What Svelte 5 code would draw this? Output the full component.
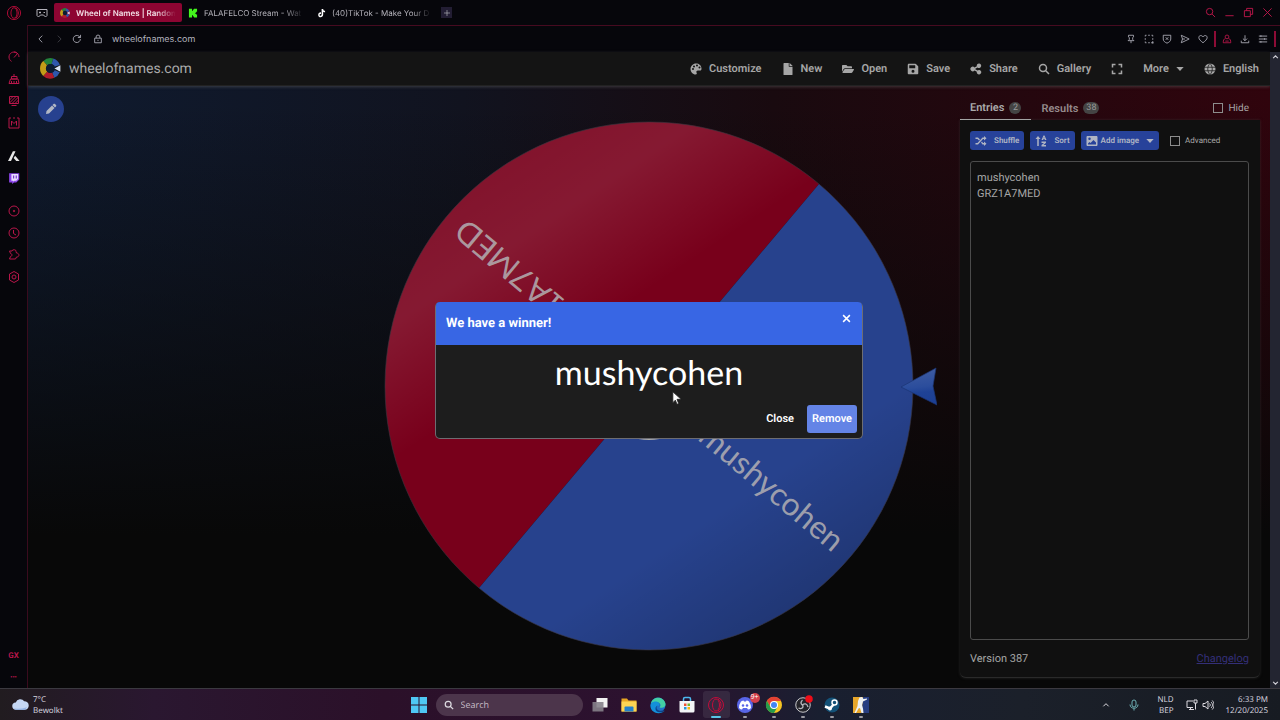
<script>
  const tabs = [
    { title: 'Wheel of Names | Random', icon: 'wheel', active: true },
    { title: 'FALAFELCO Stream - Wat', icon: 'kick' },
    { title: '(40)TikTok - Make Your D', icon: 'tiktok' },
  ];

  // 24x24 outline icons, drawn with the current colour
  const lines = {
    back: 'M15 4l-8 8 8 8',
    forward: 'M9 4l8 8-8 8',
    reload: 'M20 12a8.500 8.500 0 1 1-3-6.500L20 8M20.500 2v6.500H14',
    lock: 'M4 10h16v11H4zM7.500 10V7a4.500 4.500 0 0 1 9 0v3M12 14v3',
    search: 'M10 3a7 7 0 1 0 0 14a7 7 0 1 0 0-14M15.500 15.500L22 22',
    minimize: 'M3 19h18',
    restore: 'M3 8h13v13H3zM8 8V3h13v13h-5',
    close: 'M3 3l18 18M21 3L3 21',
    pin: 'M6 3h12v4l-2 2v4l3 3H5l3-3V9L6 7zM12 16v6',
    snapshot: 'M3 3h3M10 3h4M18 3h3v3M21 10v4M3 3v3M3 10v4M3 18v3h3M10 21h4M17 21h6M21 17v6',
    shield: 'M3 3h18v9c0 5-4 8-9 10c-5-2-9-5-9-10zM9 8l6 6M15 8l-6 6',
    send: 'M3 3l19 9-19 9 3-9zM6 12h6',
    heart: 'M12 21C7 17 2 13 2 8.500C2 3 9 2 12 7c3-5 10-4 10 1.500C22 13 17 17 12 21z',
    user: 'M12 2.500a4.500 4.500 0 1 0 0 9a4.500 4.500 0 1 0 0-9M8 11c-4 1-5 4-5 10h18c0-6-1-9-5-10M8 17h8',
    download: 'M12 3v13M7 11l5 5 5-5M3 16v5h18v-5',
    menu: 'M2 5h20M2 12h20M2 19h20M7 3v4M16 10v4M7 17v4',
    gauge: 'M22 12a10 10 0 1 0-15 8.700M12 13l8-9M12 2a10 10 0 0 1 7 3',
    cleaner: 'M12 2v5M7 7h11v5H7zM5 12h15l2 9H2zM7 16v5M12 16v5M17 16v5',
    wallpaper: 'M3 3h18v14H3zM3 10l7-7M3 16L16 3M8 17L21 4M14 17l7-7M7 21h10',
    mods: 'M6 2H2v20h20V2h-4M10 2h4M7 17V8l5 5 5-5v9',
    player: 'M12 2a10 10 0 1 0 0 20a10 10 0 1 0 0-20M12 10.500a1.500 1.500 0 1 0 0 3a1.500 1.500 0 1 0 0-3',
    clock: 'M12 2a10 10 0 1 0 0 20a10 10 0 1 0 0-20M11 6v7l5 3',
    puzzle: 'M3 4h5a4 3 0 0 1 8 1l1 3c6 0 7 8 0 8l-2 4H3l2-5c4-1 4-5 0-6z',
    gear: 'M12 1l9 5v12l-9 5-9-5V6zM12 8a4 4 0 1 0 0 8a4 4 0 1 0 0-8',
    gamepad: 'M2 5h20v12l-3 3-4-4H9l-4 4-3-3zM6 11h4M8 9v4M15 11h3',
    expand: 'M3 9V3h6M15 3h6v6M21 15v6h-6M9 21H3v-6',
    plus: 'M12 3v18M3 12h18',
    up: 'M4 16l8-8 8 8',
    down: 'M4 8l8 8 8-8',
    mic: 'M12 2a4 4 0 0 0-4 4v6a4 4 0 0 0 8 0V6a4 4 0 0 0-4-4M4 11c0 10 16 10 16 0M12 19v4',
    network: 'M14 4H2v13h12M6 21h10M9 17v4M16 2h6v6h-6zM19 8v13',
    volume: 'M2 9h4l6-5v16l-6-5H2zM15 9c2 2 2 4 0 6M18 6c4 4 4 8 0 12M20.500 3c5 6 5 12 0 18',
  };

  const solids = {
    palette: ['0 0 24 24', 'M12 1C6 1 1 6 1 12s5 11 10 11c3 0 3-2 2-4s0-4 3-4h4c2 0 3-1 3-4C23 5 18 1 12 1zM6 14a2 2 0 1 1 0-4a2 2 0 0 1 0 4zm2-5a2 2 0 1 1 0-4a2 2 0 0 1 0 4zm6-2a2 2 0 1 1 0-4a2 2 0 0 1 0 4zm5 4a2 2 0 1 1 0-4a2 2 0 0 1 0 4z'],
    file: ['0 0 384 512', 'M224 136V0H24C10 0 0 10 0 24v464c0 14 10 24 24 24h336c14 0 24-10 24-24V160H248c-13 0-24-11-24-24zM384 128H256V0h6l122 122z'],
    folder: ['0 0 576 512', 'M573 292L500 416a64 64 0 0 1-55 32H45c-19 0-30-20-21-36l73-124a64 64 0 0 1 55-32h400c19 0 30 20 21 36zM152 224h328v-48c0-27-21-48-48-48H272l-64-64H48C21 64 0 85 0 112v278l69-118c17-30 49-48 83-48z'],
    save: ['0 0 448 512', 'M434 130l-84-84a48 48 0 0 0-34-14H48C21 32 0 54 0 80v352c0 26 21 48 48 48h352c27 0 48-22 48-48V164a48 48 0 0 0-14-34zM224 416a64 64 0 1 1 0-128a64 64 0 0 1 0 128zM320 112v100c0 7-5 12-12 12H76c-7 0-12-5-12-12V108c0-7 5-12 12-12h228z'],
    share: ['0 0 24 24', 'M18 1a4.500 4.500 0 0 0-4.400 5.500L9 9.200a4.500 4.500 0 1 0 0 5.600l4.600 2.700A4.500 4.500 0 1 0 15 15l-5-3 5-3A4.500 4.500 0 1 0 18 1z'],
    shuffle: ['0 0 24 24', 'M1 5h5l4 4-2 2-3-3H1zM1 19v-3h4L15 5h3V2l5 4.500L18 11V8h-2L6 19zM12 15l2-2 2 3h2v-3l5 4.500L18 22v-3h-3z'],
    sort: ['0 0 24 24', 'M6 2l5 6H7.500v14h-3V8H1zM13 10l4-9h2l4 9h-3l-.5-1.500h-3L16 10zM17 6.500h2L18 4zM13 13h9v2.500l-5 4.500h5v3h-9v-3l5-4h-5z'],
    image: ['0 0 24 24', 'M3 2h18c1 0 2 1 2 2v16c0 1-1 2-2 2H3c-1 0-2-1-2-2V4c0-1 1-2 2-2zM4 19h16v-4l-5-5-6 6-2-2-3 3zM7 5a2.500 2.500 0 1 0 0 5a2.500 2.500 0 0 0 0-5z'],
    caret: ['0 0 24 24', 'M1 6h22L12 18z'],
    pencil: ['0 0 24 24', 'M3 16L14 5l5 5L8 21l-6 1zM15 4l2-2c1-1 2-1 3 0l2 2c1 1 1 2 0 3l-2 2z'],
  };

  const actions = [
    { label: 'Customize', icon: 'palette' },
    { label: 'New', icon: 'file' },
    { label: 'Open', icon: 'folder' },
    { label: 'Save', icon: 'save' },
    { label: 'Share', icon: 'share' },
  ];
  const sideGroups = [
    ['gauge', 'cleaner', 'wallpaper', 'mods'],
    ['aria', 'twitch'],
    ['player', 'clock', 'puzzle', 'gear'],
  ];
  const pageTools = ['pin', 'snapshot', 'shield', 'send', 'heart'];
  const apps = ['taskview', 'explorer', 'edge', 'store', 'opera', 'discord', 'chrome', 'obs', 'steam', 'cs'];
  const running = ['discord', 'chrome', 'obs', 'steam', 'cs'];

  let entries = $state('mushycohen\nGRZ1A7MED');
  let hidden = $state(false);
  let advanced = $state(false);
  let winnerOpen = $state(true);
  let names = $derived(entries.split('\n').filter((name) => name.trim()));

  function removeWinner() {
    entries = names.slice(1).join('\n');
    winnerOpen = false;
  }
</script>

{#snippet line(name)}
  <svg class="line" viewBox="0 0 24 24" aria-hidden="true"><path d={lines[name]} /></svg>
{/snippet}

{#snippet solid(name)}
  <svg class="solid" viewBox={solids[name][0]} aria-hidden="true"><path d={solids[name][1]} /></svg>
{/snippet}

{#snippet brand(name)}
  <svg class="brand" viewBox="0 0 32 32" aria-hidden="true">
    {#if name === 'wheel'}
      <g fill="none" stroke-width="9">
        <path d="M8 8A11 11 0 0 1 19 5" stroke="#23833c" />
        <path d="M19 5A11 11 0 0 1 26 12" stroke="#2f57ac" />
        <path d="M26 20A11 11 0 0 1 20 26" stroke="#2f57ac" />
        <path d="M20 26A11 11 0 0 1 8 24" stroke="#b01c2c" />
        <path d="M8 24A11 11 0 0 1 8 8" stroke="#c39d18" />
      </g>
      <circle cx="16" cy="16" r="7" fill="#0c1c33" />
      <path d="M22 16l9-5v10z" fill="#d8e2f4" />
    {:else if name === 'kick'}
      <path d="M3 2h10v7h3V5h3V2h10v10h-3v3h-3v3h3v3h3v9H19v-3h-3v-4h-3v7H3z" fill="#43f51d" />
    {:else if name === 'tiktok'}
      <path d="M18 3h5c0 4 3 6 6 6v5c-3 0-4-1-6-2v9c0 11-16 11-16 1 0-6 5-9 9-8v5c-6-1-6 6-2 6 3 0 4-2 4-4z" fill="#fff" />
    {:else if name === 'opera'}
      <g fill="none" stroke="#c20c3b" stroke-width="2">
        <circle cx="16" cy="16" r="15" />
        <ellipse cx="16" cy="16" rx="7" ry="12" />
        <path d="M20 4c8 7 8 17 0 24" />
      </g>
    {:else if name === 'aria'}
      <path d="M13 3h7L8 29H0zM19 15l12 14h-9l-7-8z" fill="#e6e6e6" />
    {:else if name === 'twitch'}
      <path d="M3 3h27v17l-8 8h-6l-5 4v-4H3z" fill="#8b45e8" />
      <path d="M9 5h18v13l-5 5h-5l-3 3v-3H9z" fill="#e8dcff" />
      <path d="M15 9v8M22 9v8" stroke="#7134c6" stroke-width="3" />
    {:else if name === 'start'}
      <path d="M0 0h15v15H0zM17 0h15v15H17zM0 17h15v15H0zM17 17h15v15H17z" fill="#4fc8f4" />
    {:else if name === 'taskview'}
      <path d="M9 2h22v19H9z" fill="#f2f2f2" />
      <path d="M1 10h22v19H1z" fill="#85818a" fill-opacity=".9" />
    {:else if name === 'explorer'}
      <path d="M1 3h11l3 4h16v22H1z" fill="#e7a623" />
      <path d="M1 9h30v20H1z" fill="#fcd454" />
      <path d="M7 29v-8q0-2 2-2h14q2 0 2 2v8z" fill="#2380cb" />
    {:else if name === 'edge'}
      <circle cx="16" cy="16" r="15" fill="#1d72c8" />
      <path d="M2 13C5-2 27-3 31 13c1 8-7 10-12 8 6-6-2-16-17-8z" fill="#43cfa4" />
      <path d="M2 13c9-8 19-2 16 5-4-4-10 3-3 9 5 4 11 3 15 0C18 39-4 29 2 13z" fill="#1490da" />
      <path d="M14 18c-4 8 6 12 15 8-5 7-19 6-18-3 0-3 2-5 3-5z" fill="#0b438c" />
    {:else if name === 'store'}
      <path d="M9 9V4q0-3 3-3h8q3 0 3 3v5" fill="none" stroke="#4cb9ef" stroke-width="3" />
      <path d="M1 8h30v20q0 3-3 3H4q-3 0-3-3z" fill="#f3f5f7" />
      <path d="M10 13h5v5h-5z" fill="#ee5131" />
      <path d="M17 13h5v5h-5z" fill="#76b72b" />
      <path d="M10 20h5v5h-5z" fill="#2498da" />
      <path d="M17 20h5v5h-5z" fill="#f8b80c" />
    {:else if name === 'discord'}
      <circle cx="16" cy="16" r="16" fill="#5865e8" />
      <path d="M8 9q4-2 5-2l1 2h4l1-2q3 0 5 2 4 6 4 13-3 3-6 3l-2-3h-8l-2 3q-3 0-6-3 0-7 4-13z" fill="#fff" />
      <circle cx="12" cy="17" r="2.500" fill="#5865e8" />
      <circle cx="20" cy="17" r="2.500" fill="#5865e8" />
    {:else if name === 'chrome'}
      <circle cx="16" cy="16" r="16" fill="#f6c523" />
      <path d="M2 8A16 16 0 0 1 30 8H16L9 20z" fill="#e34133" />
      <path d="M2 8A16 16 0 0 0 16 32l7-12H9z" fill="#279c4b" />
      <circle cx="16" cy="16" r="8" fill="#fff" />
      <circle cx="16" cy="16" r="6" fill="#4285f4" />
    {:else if name === 'obs'}
      <circle cx="16" cy="16" r="14.500" fill="#24242a" stroke="#c8c8cc" stroke-width="2" />
      <path d="M15 6c-5 5-3 10 2 11M7 22c6 3 11-1 8-6M26 20c-2-7-7-8-11-4" fill="none" stroke="#b4b4ba" stroke-width="2.500" />
      <circle cx="28" cy="4" r="7.500" fill="#ee0d18" />
    {:else if name === 'steam'}
      <circle cx="16" cy="16" r="15" fill="#135177" />
      <path d="M2 19l10 4 9-10" stroke="#fff" stroke-width="5" fill="none" />
      <circle cx="21" cy="11" r="5" fill="#135177" stroke="#fff" stroke-width="3" />
      <circle cx="12" cy="23" r="4" fill="#fff" />
    {:else if name === 'cs'}
      <path d="M0 0h32v32H0z" fill="#e7a629" />
      <path d="M20 0h12v32H17z" fill="#263d80" />
      <path d="M13 1l5-1 3 4 7-1v2l-8 4-2 7 2 7 1 9h-4l-3-10-3 1-5 9H3l6-14 1-10z" fill="#edf0f2" />
    {/if}
  </svg>
{/snippet}

<div class="desktop">
  <div class="browser">
    <aside class="sidebar">
      <button class="opera" aria-label="Opera GX menu">{@render brand('opera')}</button>
      {#each sideGroups as group}
        <div class="side-group">
          {#each group as name}
            <button aria-label={name}>
              {#if lines[name]}{@render line(name)}{:else}{@render brand(name)}{/if}
            </button>
          {/each}
        </div>
      {/each}
      <div class="side-bottom">
        <button>GX</button>
        <button aria-label="More">•••</button>
      </div>
    </aside>

    <div class="window">
      <div class="tab-strip">
        <button class="gx-corner" aria-label="GX Corner">{@render line('gamepad')}</button>
        {#each tabs as tab}
          <button class="tab" class:active={tab.active}>
            {@render brand(tab.icon)}
            <span>{tab.title}</span>
          </button>
        {/each}
        <button class="new-tab" aria-label="New tab">{@render line('plus')}</button>
        <div class="window-buttons">
          {#each ['search', 'minimize', 'restore', 'close'] as name}
            <button aria-label={name}>{@render line(name)}</button>
          {/each}
        </div>
      </div>

      <div class="frame">
        <div class="address-bar">
          <button aria-label="Back">{@render line('back')}</button>
          <button class="dim" aria-label="Forward">{@render line('forward')}</button>
          <button aria-label="Reload">{@render line('reload')}</button>
          <span class="lock">{@render line('lock')}</span>
          <input type="text" aria-label="Address" value="wheelofnames.com" />
          <div class="tools">
            {#each pageTools as name}
              <button aria-label={name}>{@render line(name)}</button>
            {/each}
          </div>
          <i class="divider"></i>
          <div class="tools">
            <button class="profile" aria-label="Profile">{@render line('user')}</button>
            <button aria-label="Downloads">{@render line('download')}</button>
            <button aria-label="Easy setup">{@render line('menu')}</button>
          </div>
          <i class="divider"></i>
        </div>

        <div class="viewport">
          <div class="site">
            <header>
              <a class="logo" href="#home">{@render brand('wheel')}<span>wheelofnames.com</span></a>
              <nav>
                {#each actions as action}
                  <button>{@render solid(action.icon)}{action.label}</button>
                {/each}
                <button class="bold-line">{@render line('search')}Gallery</button>
                <button class="bold-line" aria-label="Fullscreen">{@render line('expand')}</button>
                <button>More<span class="caret">{@render solid('caret')}</span></button>
                <button>
                  <svg class="solid" viewBox="0 0 24 24" aria-hidden="true">
                    <circle cx="12" cy="12" r="11" />
                    <path class="cut" d="M1 8.500h22M1 15.500h22M12 1c-6 6-6 16 0 22M12 1c6 6 6 16 0 22" />
                  </svg>
                  English
                </button>
              </nav>
            </header>

            <main>
              <button class="edit" aria-label="Edit title">{@render solid('pencil')}</button>

              <svg class="wheel" viewBox="0 0 576 540" role="img" aria-label="Wheel">
                <defs>
                  <linearGradient id="shine" x1="0.2" y1="0.05" x2="0.8" y2="0.95">
                    <stop offset="0" stop-color="#fff" stop-opacity="0.07" />
                    <stop offset="0.16" stop-color="#fff" stop-opacity="0.1" />
                    <stop offset="0.36" stop-color="#fff" stop-opacity="0" />
                    <stop offset="0.75" stop-color="#000" stop-opacity="0" />
                    <stop offset="1" stop-color="#000" stop-opacity="0.2" />
                  </linearGradient>
                  <linearGradient id="pointer" x1="0.6" y1="0" x2="0.7" y2="1">
                    <stop offset="0" stop-color="#3f5ca2" />
                    <stop offset="0.5" stop-color="#2b4d9c" />
                    <stop offset="0.65" stop-color="#1f4296" />
                    <stop offset="1" stop-color="#1c3f94" />
                  </linearGradient>
                </defs>
                <path d="M458 67A264 264 0 0 0 118 471Z" fill="#78001b" />
                <path d="M458 67A264 264 0 0 1 118 471Z" fill="#27428d" />
                <circle cx="288" cy="269" r="264" fill="url(#shine)" stroke="#3b3540" stroke-opacity="0.6" />
                <g class="names" transform="translate(288 269)">
                  <text transform="rotate(40)" x="248" y="10">mushycohen</text>
                  <text transform="rotate(220)" x="248" y="12">GRZ1A7MED</text>
                </g>
                <circle cx="288" cy="269" r="54" fill="#aaa" />
                <path d="M540 270L575 251L572 269L576 288Z" fill="url(#pointer)" stroke="#1b3573" stroke-opacity="0.7" />
              </svg>

              <section class="panel">
                <div class="panel-tabs">
                  <button class="current">Entries <b>{names.length}</b></button>
                  <button>Results <b>38</b></button>
                  <label><input type="checkbox" bind:checked={hidden} />Hide</label>
                </div>
                <div class="card">
                  <div class="card-tools">
                    <button>{@render solid('shuffle')}Shuffle</button>
                    <button>{@render solid('sort')}Sort</button>
                    <button class="image">{@render solid('image')}Add image<span class="caret">{@render solid('caret')}</span></button>
                    <label><input type="checkbox" bind:checked={advanced} />Advanced</label>
                  </div>
                  <textarea aria-label="Entries" spellcheck="false" bind:value={entries}></textarea>
                  <div class="card-foot">
                    <span>Version 387</span>
                    <a href="#changelog">Changelog</a>
                  </div>
                </div>
              </section>
            </main>
          </div>

          <div class="scrollbar">
            {@render line('up')}
            {@render line('down')}
          </div>

          {#if winnerOpen}
            <div class="overlay">
              <div class="dialog" role="dialog" aria-labelledby="winner-title">
                <div class="dialog-head">
                  <h2 id="winner-title">We have a winner!</h2>
                  <button aria-label="Close dialog" onclick={() => (winnerOpen = false)}>{@render line('close')}</button>
                </div>
                <p>{names[0]}</p>
                <div class="dialog-actions">
                  <button onclick={() => (winnerOpen = false)}>Close</button>
                  <button class="remove" onclick={removeWinner}>Remove</button>
                </div>
                <svg class="cursor" viewBox="0 0 12 18" aria-hidden="true">
                  <path d="M1 1v13l3-3 2 5 2-1-2-5h5z" />
                </svg>
              </div>
            </div>
          {/if}
        </div>
      </div>
    </div>
  </div>

  <footer class="taskbar">
    <button class="weather">
      <svg viewBox="0 0 32 24" aria-hidden="true">
        <path d="M8 22a7 7 0 0 1-1-14 9 9 0 0 1 16-2 8 8 0 0 1 1 16z" fill="#c5d8f5" />
        <path d="M4 19q10 3 24-2-2 5-6 5H8q-3 0-4-3z" fill="#93b4e6" />
      </svg>
      <span>7°C<br />Bewolkt</span>
    </button>

    <div class="apps">
      <button class="app" aria-label="Start">{@render brand('start')}</button>
      <label class="search">
        {@render line('search')}
        <input type="text" placeholder="Search" aria-label="Search" />
      </label>
      {#each apps as app}
        <button class="app" class:focused={app === 'opera'} class:running={running.includes(app)} aria-label={app}>
          {@render brand(app)}
          {#if app === 'discord'}<span class="badge">9+</span>{/if}
        </button>
      {/each}
    </div>

    <div class="tray">
      {@render line('up')}
      <span class="mic">{@render line('mic')}</span>
      <span class="lang">NLD<br />BEP</span>
      <span class="status">{@render line('network')}{@render line('volume')}</span>
      <span class="time">6:33 PM<br />12/20/2025</span>
    </div>
  </footer>
</div>

<style>
  :global(body) {
    background: #06060b;
  }
  .desktop {
    display: flex;
    flex-direction: column;
    height: 100vh;
    overflow: hidden;
    font-family: Roboto, 'Liberation Sans', sans-serif;
    font-size: 11px;
    text-rendering: geometricPrecision;
    color: #a6a6a6;
  }
  .desktop * {
    box-sizing: border-box;
  }
  button,
  input,
  textarea {
    font: inherit;
    color: inherit;
    text-rendering: inherit;
    background: none;
    border: 0;
    padding: 0;
    margin: 0;
    outline: none;
  }
  button {
    display: flex;
    align-items: center;
    justify-content: center;
  }
  svg {
    display: block;
    flex: none;
    width: 12px;
    height: 12px;
  }
  .line {
    fill: none;
    stroke: currentColor;
    stroke-width: 2;
  }
  .solid {
    fill: currentColor;
    fill-rule: evenodd;
  }
  .brand {
    overflow: visible;
  }

  .browser {
    flex: 1;
    min-height: 0;
    display: flex;
  }
  .window {
    flex: 1;
    min-width: 0;
    display: flex;
    flex-direction: column;
  }

  /* sidebar */
  .sidebar {
    width: 27px;
    display: flex;
    flex-direction: column;
    gap: 11px;
    color: #b8164a;
  }
  .sidebar button {
    width: 100%;
    height: 22px;
  }
  .sidebar .opera {
    height: 25px;
    margin-bottom: 10px;
  }
  .opera svg {
    width: 14px;
    height: 14px;
  }
  .side-bottom {
    margin-top: auto;
    font-size: 8px;
    font-weight: 700;
  }
  .side-bottom button:last-child {
    font-size: 6px;
  }

  /* tabs */
  .tab-strip {
    height: 25px;
    display: flex;
    align-items: center;
    padding: 0 7px;
    font-family: Inter, sans-serif;
    font-size: 8px;
    color: #b4b2ba;
  }
  .gx-corner {
    width: 16px;
    margin-right: 4px;
  }
  .tab {
    width: 128px;
    height: 19px;
    padding: 0 6px;
    gap: 6px;
    border-radius: 2px;
  }
  .tab svg {
    width: 10px;
    height: 10px;
  }
  .tab span {
    flex: 1;
    min-width: 0;
    text-align: left;
    white-space: nowrap;
    mask-image: linear-gradient(to right, #000 80%, transparent);
  }
  .tab.active {
    background: #8d0532;
    color: #f2dfe6;
    font-weight: 600;
  }
  .new-tab {
    width: 11px;
    height: 11px;
    margin-left: 3px;
    background: #221d33;
  }
  .new-tab svg {
    width: 8px;
    height: 8px;
  }
  .window-buttons {
    display: flex;
    gap: 8px;
    margin-left: auto;
    color: #c0174c;
  }
  .window-buttons svg {
    width: 11px;
    height: 11px;
  }

  .frame {
    flex: 1;
    min-height: 0;
    display: flex;
    flex-direction: column;
    border-top: 1px solid #460a20;
    border-left: 1px solid #3a0b1e;
  }
  .address-bar {
    height: 26px;
    display: flex;
    align-items: center;
    padding: 0 4px 0 8px;
    gap: 6px;
    font-family: Inter, sans-serif;
    font-size: 9px;
    color: #b4b4bf;
  }
  .address-bar svg {
    width: 10px;
    height: 10px;
  }
  .address-bar > button,
  .lock {
    width: 10px;
    margin-right: 2px;
  }
  .address-bar .lock {
    margin-left: 3px;
  }
  .address-bar input {
    flex: 1;
    min-width: 0;
    margin-left: 1px;
  }
  .dim {
    opacity: 0.35;
  }
  .tools {
    display: flex;
    gap: 8px;
  }
  .divider {
    width: 2px;
    height: 16px;
    background: #8d0c36;
  }
  .profile {
    color: #c0174c;
  }

  /* web page */
  .viewport {
    flex: 1;
    min-height: 0;
    display: flex;
    position: relative;
  }
  .site {
    flex: 1;
    min-width: 0;
    display: flex;
    flex-direction: column;
    background:
      linear-gradient(to bottom, transparent 8%, #080808 76%),
      linear-gradient(to right, #0f1b30, #11131f 35%, #190a0f 60%, #30040d);
  }
  header {
    height: 34px;
    flex: none;
    display: flex;
    align-items: center;
    justify-content: space-between;
    padding: 0 11px 0 12px;
    background: #141414;
    border-bottom: 1px solid #222;
    box-shadow: 0 1px 3px rgba(120, 120, 120, 0.4);
  }
  .logo {
    display: flex;
    align-items: center;
    gap: 8px;
    color: #aaa;
    font-size: 14px;
    text-decoration: none;
  }
  .logo svg {
    width: 21px;
    height: 21px;
  }
  nav {
    display: flex;
    gap: 20px;
    font-weight: 600;
  }
  nav button {
    gap: 7px;
  }
  .bold-line .line {
    stroke-width: 3;
  }
  .caret svg {
    width: 8px;
    height: 8px;
  }
  .cut {
    fill: none;
    stroke: #141414;
    stroke-width: 1.5;
  }
  main {
    flex: 1;
    min-height: 0;
    display: grid;
    grid-template-columns: minmax(0, 1fr) auto minmax(0, 1fr);
  }
  .edit {
    width: 26px;
    height: 26px;
    margin: 10px;
    border-radius: 50%;
    background: #27418f;
    color: #b2b7c4;
  }
  .wheel {
    width: 576px;
    height: 540px;
    align-self: center;
  }
  .names {
    font-family: Lato, sans-serif;
    font-size: 32px;
    text-anchor: end;
    fill: #b3b0b3;
    fill-opacity: 0.85;
  }

  /* entries panel */
  .panel {
    display: flex;
    flex-direction: column;
    width: 300px;
    justify-self: end;
    margin: 10px 10px 10px 0;
  }
  .panel-tabs {
    display: flex;
    height: 24px;
    font-weight: 600;
  }
  .panel-tabs button {
    gap: 5px;
    padding: 0 10px;
    color: #958b8c;
  }
  .panel-tabs .current {
    color: #aaa;
    border-bottom: 1px solid #b8b8b8;
  }
  .panel-tabs b {
    padding: 0 3px;
    min-width: 12px;
    border-radius: 6px;
    background: #444;
    color: #999;
    font-size: 9px;
    line-height: 12px;
    font-weight: 400;
  }
  label {
    display: flex;
    align-items: center;
    gap: 5px;
    font-size: 10px;
    font-weight: 400;
  }
  .panel-tabs label {
    margin: 0 11px 0 auto;
  }
  input[type='checkbox'] {
    appearance: none;
    width: 10px;
    height: 10px;
    border: 1px solid #8d8d8d;
  }
  input[type='checkbox']:checked {
    background: #8d8d8d;
  }
  .card {
    flex: 1;
    min-height: 0;
    display: flex;
    flex-direction: column;
    padding: 11px 11px 11px 10px;
    background: #101010;
    border-bottom: 1px solid #2a2a2a;
    border-radius: 0 0 6px 6px;
    box-shadow: 0 0 3px rgba(70, 70, 70, 0.5);
  }
  .card-tools {
    display: flex;
    gap: 6px;
    font-size: 8px;
  }
  .card-tools button {
    height: 19px;
    padding: 0 5px;
    gap: 7px;
    border-radius: 3px;
    background: #27429a;
    font-weight: 600;
    color: #b0b5c4;
  }
  .card-tools .image {
    gap: 3px;
  }
  .card-tools .image .caret {
    margin-left: 4px;
  }
  .card-tools label {
    margin-left: 5px;
    font-size: 8px;
  }
  textarea {
    flex: 1;
    min-height: 0;
    margin-top: 11px;
    padding: 8px 6px;
    border: 1px solid #4b4b4b;
    border-radius: 3px;
    line-height: 16px;
    resize: none;
  }
  .card-foot {
    display: flex;
    justify-content: space-between;
    margin-top: 11px;
    line-height: 15px;
  }
  .card-foot a {
    color: #342f78;
  }
  .scrollbar {
    width: 10px;
    display: flex;
    flex-direction: column;
    justify-content: space-between;
    align-items: center;
    background: #232531;
    color: #d0d0d8;
  }
  .scrollbar svg {
    width: 7px;
    height: 10px;
    stroke-width: 4;
  }

  /* winner dialog */
  .overlay {
    position: absolute;
    inset: 0 10px 0 0;
    display: flex;
    align-items: center;
    justify-content: center;
  }
  .dialog {
    position: relative;
    width: 428px;
    border: 1px solid #6d6d72;
    border-top: 0;
    border-radius: 5px;
    background: #1d1d1d;
    color: #fff;
  }
  .dialog-head {
    display: flex;
    align-items: flex-start;
    justify-content: space-between;
    height: 43px;
    padding: 0 10px;
    border-radius: 4px 4px 0 0;
    background: #3866e4;
  }
  h2 {
    margin: 0;
    font-size: 13px;
    font-weight: 700;
    line-height: 43px;
  }
  .dialog-head button {
    width: 11px;
    height: 34px;
  }
  .dialog-head svg {
    width: 9px;
    height: 9px;
    stroke-width: 4;
  }
  .dialog p {
    margin: 0;
    padding-top: 6px;
    text-align: center;
    font-family: Lato, sans-serif;
    font-size: 34px;
    line-height: 44px;
  }
  .dialog-actions {
    display: flex;
    justify-content: flex-end;
    gap: 8px;
    padding: 10px 5px 5px;
    font-weight: 600;
  }
  .dialog-actions button {
    height: 28px;
    padding: 0 5px;
    border-radius: 3px;
  }
  .dialog-actions .remove {
    background: #6484e6;
  }
  .cursor {
    position: absolute;
    left: 236px;
    top: 89px;
    width: 10px;
    height: 15px;
    fill: #fff;
    stroke: #222;
    stroke-width: 1;
  }

  /* taskbar */
  .taskbar {
    height: 32px;
    flex: none;
    display: grid;
    grid-template-columns: 1fr auto 1fr;
    align-items: center;
    border-top: 1px solid #3b3940;
    background: linear-gradient(to right, #211c20, #2a1730 12%, #2b1029 30%, #2c1230 52%, #191f30 64%, #1b202a 80%, #171b22);
    font-family: 'Open Sans', sans-serif;
    font-size: 8px;
    line-height: 11px;
    color: #dcdae0;
  }
  .weather {
    justify-self: start;
    gap: 4px;
    margin-left: 12px;
    text-align: left;
  }
  .weather svg {
    width: 17px;
    height: 13px;
  }
  .apps {
    display: flex;
    align-items: center;
    gap: 2px;
  }
  .app {
    position: relative;
    width: 27px;
    height: 27px;
    border-radius: 3px;
  }
  .app svg {
    width: 16px;
    height: 16px;
  }
  .app.focused {
    background: rgba(255, 255, 255, 0.08);
  }
  .app.running::after,
  .app.focused::after {
    content: '';
    position: absolute;
    left: 50%;
    bottom: 0;
    width: 4px;
    height: 2px;
    margin-left: -2px;
    border-radius: 1px;
    background: #9b9ba3;
  }
  .app.focused::after {
    width: 10px;
    margin-left: -5px;
    background: #59c5e8;
  }
  .badge {
    position: absolute;
    top: 2px;
    right: -1px;
    width: 10px;
    height: 10px;
    border-radius: 50%;
    background: #d4404c;
    color: #fff;
    font-size: 7px;
    line-height: 10px;
    text-align: center;
  }
  .search {
    width: 147px;
    height: 22px;
    padding: 0 8px;
    gap: 7px;
    margin: 0 2px 0 1px;
    border-radius: 11px;
    background: #4c354b;
    font-size: 9px;
  }
  .search svg {
    width: 10px;
    height: 10px;
    stroke-width: 3;
  }
  .search input {
    width: 100%;
    min-width: 0;
  }
  .search input::placeholder {
    color: #c6bcc6;
    opacity: 1;
  }
  .tray {
    display: flex;
    align-items: center;
    justify-self: end;
    gap: 16px;
    padding-right: 12px;
    white-space: nowrap;
  }
  .tray > svg {
    width: 8px;
    height: 8px;
    stroke-width: 3;
  }
  .mic {
    color: #6fb1b6;
    margin: 0 2px;
  }
  .status {
    display: flex;
    gap: 4px;
    margin: 0 -4px;
  }
  .lang,
  .time {
    text-align: right;
  }
</style>
